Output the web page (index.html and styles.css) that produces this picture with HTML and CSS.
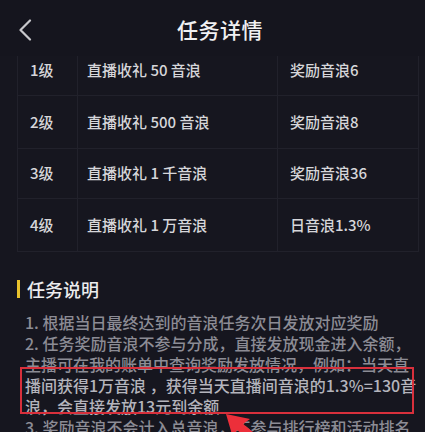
FILE: index.html
```html
<!DOCTYPE html>
<html lang="zh">
<head>
<meta charset="utf-8">
<title>任务详情</title>
<link rel="stylesheet" href="styles.css">
</head>
<body>
<div class="page">
  <header class="header">
    <div class="back">
      <svg width="14" height="22" viewBox="0 0 14 22"><path d="M12 1.5 L2.5 11 L12 20.5" fill="none" stroke="#c8c8cc" stroke-width="2.2" stroke-linecap="round" stroke-linejoin="round"/></svg>
    </div>
    <h1 class="title">任务详情</h1>
    <div></div>
  </header>

  <table class="levels">
    <tr class="first"><td class="c1">1级</td><td class="c2">直播收礼 50 音浪</td><td class="c3">奖励音浪6</td></tr>
    <tr><td class="c1">2级</td><td class="c2">直播收礼 500 音浪</td><td class="c3">奖励音浪8</td></tr>
    <tr class="short"><td class="c1">3级</td><td class="c2">直播收礼 1 千音浪</td><td class="c3">奖励音浪36</td></tr>
    <tr><td class="c1">4级</td><td class="c2">直播收礼 1 万音浪</td><td class="c3">日音浪1.3%</td></tr>
  </table>

  <section class="desc">
    <h2 class="desc-title"><span class="bar"></span>任务说明</h2>
    <div class="desc-body">
      <p class="line">1. 根据当日最终达到的音浪任务次日发放对应奖励</p>
      <p class="line">2. 任务奖励音浪不参与分成，直接发放现金进入余额，</p>
      <p class="line">主播可在我的账单中查询奖励发放情况，例如：当天直</p>
      <p class="line hl">播间获得1万音浪 ，获得当天直播间音浪的1.3%=130音</p>
      <p class="line hl">浪，会直接发放13元到余额</p>
      <p class="line">3. 奖励音浪不会计入总音浪，不参与排行榜和活动排名</p>
      <div class="redbox"></div>
      <svg class="arrow" width="40" height="30" viewBox="0 0 40 30"><polygon points="0,0 24,5 17,10 32,22 26,28 11,16 7,24" fill="#ec2f3a"/></svg>
    </div>
  </section>
</div>
</body>
</html>
```

FILE: styles.css
```css
html, body {
  margin: 0;
  padding: 0;
  background: #16161f;
}
body {
  width: 425px;
  height: 432px;
  overflow: hidden;
  font-family: "Noto Sans CJK SC", "Noto Sans", sans-serif;
}
.page {
  background: #16161f;
}
.header {
  display: grid;
  grid-template-columns: 50px 1fr 35px;
  align-items: center;
  height: 56px;
  background: #15151e;
}
.back {
  padding-left: 18px;
  display: flex;
  align-items: center;
  padding-top: 2px;
}
.title {
  margin: 0;
  text-align: center;
  color: #f0f0f2;
  font-size: 21px;
  font-weight: 500;
  letter-spacing: 0.5px;
  line-height: 56px;
  padding-top: 1px;
}
.levels {
  margin-left: 17px;
  width: 401px;
  border-collapse: collapse;
  table-layout: fixed;
  color: #d6d6da;
  font-size: 15px;
  font-weight: 500;
}
.levels td {
  border: 1px solid #21212b;
  height: 52px;
  padding: 0;
  line-height: 20px;
  vertical-align: middle;
  white-space: nowrap;
}
.levels tr.first td {
  border-top: none;
  height: 39px;
  padding-bottom: 11px;
  box-sizing: border-box;
}
.levels tr.short td {
  height: 49px;
}
.c1 { width: 60px; padding-left: 12px !important; }
.c2 { width: 200px; padding-left: 9px !important; }
.c3 { width: 141px; padding-left: 12px !important; }

.desc {
  margin-top: 25px;
}
.desc-title {
  margin: 0;
  display: flex;
  align-items: center;
  height: 24px;
  padding-left: 17px;
  color: #ececee;
  font-size: 18px;
  font-weight: 500;
}
.bar {
  display: inline-block;
  width: 3px;
  height: 18px;
  background: #e8c22c;
  margin-right: 7px;
}
.desc-body {
  position: relative;
  margin-top: 11px;
  padding-left: 25px;
}
.line {
  margin: 0;
  font-size: 16px;
  line-height: 21px;
  color: #8c8c95;
  font-weight: 500;
  white-space: nowrap;
}
.line.hl {
  color: #b4b4bc;
}
.redbox {
  position: absolute;
  left: 20px;
  top: 55px;
  width: 390px;
  height: 43px;
  border: 2px solid #d8303c;
}
.arrow {
  position: absolute;
  left: 226px;
  top: 102px;
}
```
